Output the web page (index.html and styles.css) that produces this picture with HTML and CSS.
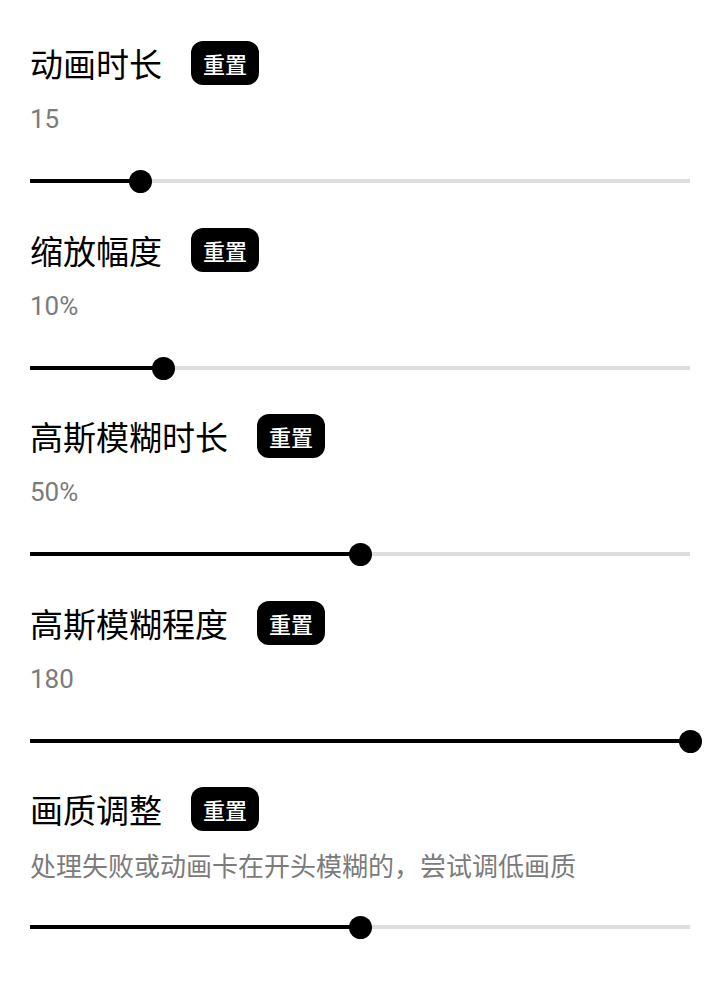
FILE: index.html
```html
<!DOCTYPE html>
<html lang="zh-CN">
<head>
<meta charset="utf-8">
<title>设置</title>
<link rel="stylesheet" href="styles.css">
</head>
<body>
<main class="settings">
  <section class="item">
    <div class="head"><span class="title">动画时长</span><button class="reset">重置</button></div>
    <div class="value">15</div>
    <div class="slider"><div class="track"><div class="fill" style="width:16.67%"></div></div><div class="thumb" style="left:16.67%"></div></div>
  </section>
  <section class="item">
    <div class="head"><span class="title">缩放幅度</span><button class="reset">重置</button></div>
    <div class="value">10%</div>
    <div class="slider"><div class="track"><div class="fill" style="width:20.3%"></div></div><div class="thumb" style="left:20.3%"></div></div>
  </section>
  <section class="item">
    <div class="head"><span class="title">高斯模糊时长</span><button class="reset">重置</button></div>
    <div class="value">50%</div>
    <div class="slider"><div class="track"><div class="fill" style="width:50%"></div></div><div class="thumb" style="left:50%"></div></div>
  </section>
  <section class="item">
    <div class="head"><span class="title">高斯模糊程度</span><button class="reset">重置</button></div>
    <div class="value">180</div>
    <div class="slider"><div class="track"><div class="fill" style="width:100%"></div></div><div class="thumb" style="left:100%"></div></div>
  </section>
  <section class="item">
    <div class="head"><span class="title">画质调整</span><button class="reset">重置</button></div>
    <div class="desc">处理失败或动画卡在开头模糊的，尝试调低画质</div>
    <div class="slider"><div class="track"><div class="fill" style="width:50%"></div></div><div class="thumb" style="left:50%"></div></div>
  </section>
</main>
</body>
</html>
```
FILE: styles.css
```css
html, body {
  margin: 0;
  padding: 0;
  background: #ffffff;
}
body {
  font-family: "Noto Sans CJK SC", "Noto Sans", sans-serif;
  color: #000;
}
.settings {
  display: flex;
  flex-direction: column;
  gap: 34.5px;
  padding: 41px 30px 0 30px;
}
.item {
  display: flex;
  flex-direction: column;
}
.head {
  display: flex;
  align-items: center;
  gap: 29px;
  height: 44px;
}
.title {
  font-size: 33px;
  line-height: 44px;
  font-weight: 400;
  color: #000;
}
.reset {
  height: 44px;
  padding: 0 12px;
  border: none;
  border-radius: 12px;
  background: #000;
  color: #fff;
  font-family: "Noto Sans CJK SC", sans-serif;
  font-size: 22px;
  font-weight: 500;
  line-height: 44px;
}
.value {
  margin-top: 17px;
  font-family: Roboto, "Noto Sans", sans-serif;
  font-size: 26px;
  line-height: 34px;
  color: #7b7b7b;
}
.desc {
  margin-top: 17px;
  font-size: 26px;
  line-height: 34px;
  color: #7b7b7b;
}
.slider {
  position: relative;
  margin-top: 33px;
  height: 24px;
}
.track {
  position: relative;
  top: 10px;
  height: 4px;
  background: #dedede;
}
.fill {
  height: 100%;
  background: #000;
}
.thumb {
  position: absolute;
  top: 1px;
  width: 23px;
  height: 23px;
  margin-left: -11.5px;
  border-radius: 50%;
  background: #000;
}
```
